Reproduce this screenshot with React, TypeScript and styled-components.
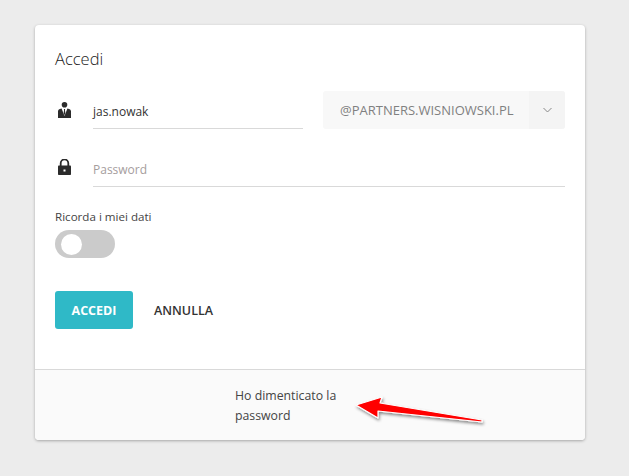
import React from 'react';
import styled, { createGlobalStyle } from 'styled-components';

const GlobalStyle = createGlobalStyle`
  html, body {
    margin: 0;
    padding: 0;
    background: #ececec;
    font-family: "Open Sans", "Liberation Sans", sans-serif;
    color: #333;
  }
`;

const Page = styled.div`
  width: 629px;
  height: 476px;
  box-sizing: border-box;
  padding: 25px 44px 0 35px;
  overflow: hidden;
`;

const Card = styled.div`
  position: relative;
  width: 550px;
  height: 415px;
  background: #fff;
  border-radius: 4px;
  box-shadow: 0 1px 3px rgba(0, 0, 0, 0.3);
  display: flex;
  flex-direction: column;
  overflow: hidden;
`;

const Body = styled.div`
  height: 344px;
  box-sizing: border-box;
  padding: 23px 20px 0;
  display: flex;
  flex-direction: column;
`;

const Title = styled.h1`
  margin: 0 0 21px;
  font-size: 16.5px;
  line-height: 22px;
  font-weight: 300;
  color: #222;
`;

const Row = styled.div`
  display: flex;
  align-items: flex-start;
  height: 58px;
`;

const IconSlot = styled.div<{ $top: number }>`
  width: 38px;
  height: 38px;
  flex: none;
  display: flex;
  padding: ${p => p.$top}px 0 0 3px;
  box-sizing: border-box;
`;

const Field = styled.div<{ $width?: number }>`
  ${p => (p.$width ? `width: ${p.$width}px;` : 'flex: 1;')}
  height: 38px;
  box-sizing: border-box;
  border-bottom: 1px solid #d9d9d9;
  font-size: 12px;
  line-height: 41px;
  color: ${p => (p.$width ? '#333' : '#a59d9d')};
`;

const Select = styled.div`
  margin-left: 20px;
  width: 242px;
  height: 38px;
  display: flex;
  background: #f8f8f8;
  border-radius: 3px;
  overflow: hidden;
`;

const SelectValue = styled.div`
  flex: 1;
  padding-left: 17px;
  font-size: 13px;
  line-height: 38px;
  color: #808080;
`;

const SelectCaret = styled.div`
  width: 36px;
  background: #f4f4f4;
  display: flex;
  align-items: center;
  justify-content: center;
  color: #888;
`;

const RememberLabel = styled.div`
  margin-top: 1px;
  font-size: 11.6px;
  line-height: 18px;
  color: #444;
`;

const Toggle = styled.div`
  margin-top: 4px;
  width: 60px;
  height: 28px;
  border-radius: 14px;
  background: #cbcbcb;
  display: flex;
  align-items: center;
  padding-left: 6px;
  box-sizing: border-box;
`;

const Knob = styled.div`
  width: 21px;
  height: 21px;
  border-radius: 50%;
  background: #fff;
`;

const Actions = styled.div`
  margin-top: 33px;
  display: flex;
  align-items: center;
  gap: 21px;
`;

const PrimaryButton = styled.button`
  width: 78px;
  height: 38px;
  padding: 0;
  border: 0;
  border-radius: 3px;
  background: #2fb9c7;
  color: #fff;
  font: 700 12.5px "Open Sans", sans-serif;
`;

const GhostButton = styled.button`
  padding: 0;
  border: 0;
  background: none;
  color: #333;
  font: 600 12.5px "Open Sans", sans-serif;
`;

const Footer = styled.div`
  flex: 1;
  background: #fafafa;
  border-top: 1px solid #d9d9d9;
  padding: 16px 0 0 200px;
`;

const ForgotLink = styled.div`
  width: 120px;
  font-size: 12.3px;
  line-height: 20px;
  color: #444;
`;

const ArrowMark = styled.svg`
  position: absolute;
  left: 316px;
  top: 364px;
`;

const UserIcon = () => (
  <svg width="13" height="16" viewBox="0 0 13 16">
    <circle cx="6.5" cy="2.8" r="2.8" fill="#2b2b2b" />
    <path d="M0 16V9.5C0 8 1 7.2 3.6 6.6L6.5 14 9.4 6.6C12 7.2 13 8 13 9.5V16Z" fill="#2b2b2b" />
    <path d="M5.9 7h1.2l-.1 1.5.4 3L6.5 13l-.9-1.5.4-3Z" fill="#2b2b2b" />
  </svg>
);

const LockIcon = () => (
  <svg width="13" height="16" viewBox="0 0 13 16">
    <path d="M2.7 7V4.2a3.8 3.8 0 0 1 7.6 0V7" fill="none" stroke="#2b2b2b" strokeWidth="1.8" />
    <rect x="0" y="6.5" width="13" height="9.5" rx="0.8" fill="#2b2b2b" />
    <rect x="5.5" y="10.5" width="2" height="2" fill="#fff" />
  </svg>
);

const Chevron = () => (
  <svg width="9" height="6" viewBox="0 0 9 6">
    <path d="M0.5 1L4.5 5 8.5 1" fill="none" stroke="currentColor" strokeWidth="1" />
  </svg>
);

const App = () => (
  <>
    <GlobalStyle />
    <Page>
      <Card>
        <Body>
          <Title>Accedi</Title>
          <Row>
            <IconSlot $top={11}>
              <UserIcon />
            </IconSlot>
            <Field $width={210}>jas.nowak</Field>
            <Select>
              <SelectValue>@PARTNERS.WISNIOWSKI.PL</SelectValue>
              <SelectCaret>
                <Chevron />
              </SelectCaret>
            </Select>
          </Row>
          <Row>
            <IconSlot $top={10}>
              <LockIcon />
            </IconSlot>
            <Field>Password</Field>
          </Row>
          <RememberLabel>Ricorda i miei dati</RememberLabel>
          <Toggle>
            <Knob />
          </Toggle>
          <Actions>
            <PrimaryButton>ACCEDI</PrimaryButton>
            <GhostButton>ANNULLA</GhostButton>
          </Actions>
        </Body>
        <Footer>
          <ForgotLink>Ho dimenticato la password</ForgotLink>
        </Footer>
        <ArrowMark width="140" height="40" viewBox="0 0 140 40">
          <defs>
            <filter id="arrowShadow" x="-10%" y="-30%" width="120%" height="170%">
              <feDropShadow dx="1" dy="2" stdDeviation="1.5" floodColor="#000" floodOpacity="0.45" />
            </filter>
          </defs>
          <path
            d="M5 16L31 8 29 14 131 31 131 33 27 22 27 29Z"
            fill="#f00"
            stroke="#fff"
            strokeWidth="1.2"
            strokeLinejoin="round"
            filter="url(#arrowShadow)"
          />
        </ArrowMark>
      </Card>
    </Page>
  </>
);

export default App;
